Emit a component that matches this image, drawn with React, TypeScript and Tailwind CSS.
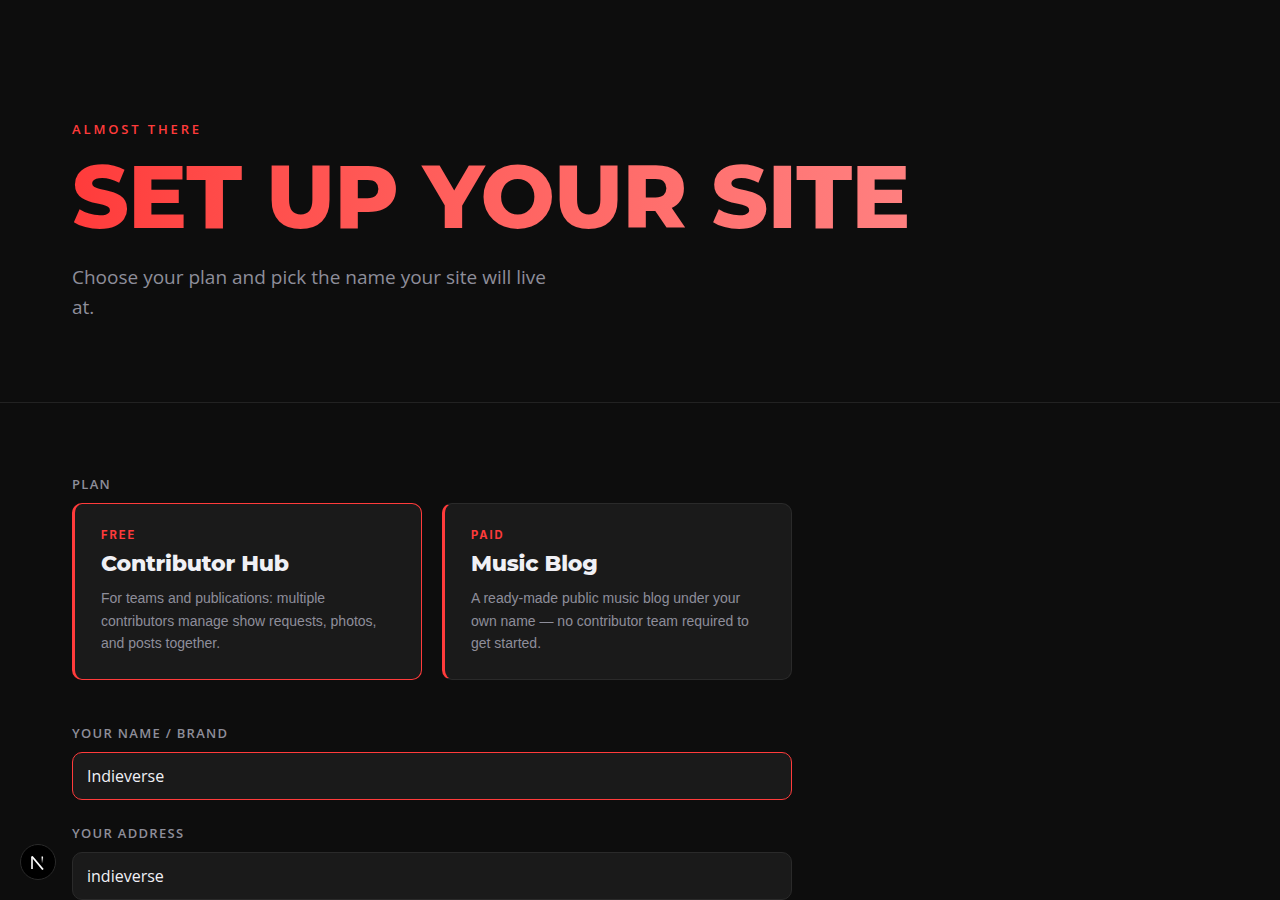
import React from "react";

function NextBadge() {
  return (
    <div className="fixed left-[20px] bottom-[20px] w-[36px] h-[36px] rounded-full bg-black border border-[#2a2a2a] flex items-center justify-center">
      <svg width="16" height="16" viewBox="0 0 16 16" fill="none">
        <defs>
          <linearGradient id="nfade" gradientUnits="userSpaceOnUse" x1="0" y1="2.5" x2="0" y2="9.5">
            <stop offset="0.1" stopColor="#fff" />
            <stop offset="1" stopColor="#fff" stopOpacity="0" />
          </linearGradient>
        </defs>
        <path d="M2 2.5V15" stroke="#fff" strokeWidth="1.6" />
        <path d="M2 2.5L13 15.5" stroke="#fff" strokeWidth="1.8" />
        <path d="M12.3 2.5V9.5" stroke="url(#nfade)" strokeWidth="1.5" />
      </svg>
    </div>
  );
}

function PlanCard({ tag, title, body, selected }: { tag: string; title: string; body: string; selected?: boolean }) {
  return (
    <div
      className={`flex-1 rounded-[10px] bg-[#1a1a1a] border border-l-[3px] border-l-[#ff3b3b] pl-[26px] pr-[28px] pt-[24px] pb-[24px] ${
        selected ? "border-[#ff3b3b]" : "border-[#2a2a2a]"
      }`}
    >
      <div className="text-[11.2px] leading-[14px] font-bold tracking-[0.17em] text-[#ff3b3b] font-['Inter',sans-serif]">{tag}</div>
      <div className="mt-[7px] text-[22px] leading-[30px] font-extrabold tracking-[-0.01em] text-[#f0f0f5] font-['Montserrat','Inter',sans-serif]">{title}</div>
      <p className="mt-[8.3px] text-[14px] leading-[22.4px] text-[#8e8e9a] font-['Liberation_Sans',sans-serif]">{body}</p>
    </div>
  );
}

function Field({ label, value, selected }: { label: string; value: string; selected?: boolean }) {
  return (
    <div>
      <div className="text-[13px] leading-[18px] font-semibold tracking-[0.1em] text-[#8e8e9a] mb-[10px]">{label}</div>
      <div
        className={`h-[48px] flex items-center px-[14px] rounded-[10px] bg-[#1a1a1a] border text-[16px] text-[#f0f0f5] ${
          selected ? "border-[#ff3b3b]" : "border-[#2a2a2a]"
        }`}
      >
        {value}
      </div>
    </div>
  );
}

export default function App() {
  return (
    <main className="relative h-[900px] overflow-hidden bg-[#0d0d0d] antialiased font-['Open_Sans',sans-serif]">
      <header className="px-[72px] pt-[120px] h-[403px] border-b border-[#222222]">
        <div className="text-[13px] leading-[18px] font-semibold tracking-[0.22em] text-[#ff3b3b]">ALMOST THERE</div>
        <h1 className="mt-[11px] w-fit text-[88px] leading-[96px] font-extrabold tracking-[-0.01em] bg-gradient-to-r from-[#ff3b3b] to-[#ff8080] bg-clip-text text-transparent font-['Montserrat','Inter',sans-serif]">
          SET UP YOUR SITE
        </h1>
        <p className="mt-[17px] w-[480px] text-[19px] leading-[30px] text-[#8e8e9a]">
          Choose your plan and pick the name your site will live at.
        </p>
      </header>

      <section className="px-[72px] pt-[72px] w-[864px]">
        <div className="text-[13px] leading-[18px] font-semibold tracking-[0.1em] text-[#8e8e9a] mb-[10px]">PLAN</div>
        <div className="flex gap-[20px]">
          <PlanCard
            selected
            tag="FREE"
            title="Contributor Hub"
            body="For teams and publications: multiple contributors manage show requests, photos, and posts together."
          />
          <PlanCard
            tag="PAID"
            title="Music Blog"
            body="A ready-made public music blog under your own name — no contributor team required to get started."
          />
        </div>
        <div className="mt-[44px] flex flex-col gap-[24px]">
          <Field selected label="YOUR NAME / BRAND" value="Indieverse" />
          <Field label="YOUR ADDRESS" value="indieverse" />
        </div>
      </section>

      <NextBadge />
    </main>
  );
}
